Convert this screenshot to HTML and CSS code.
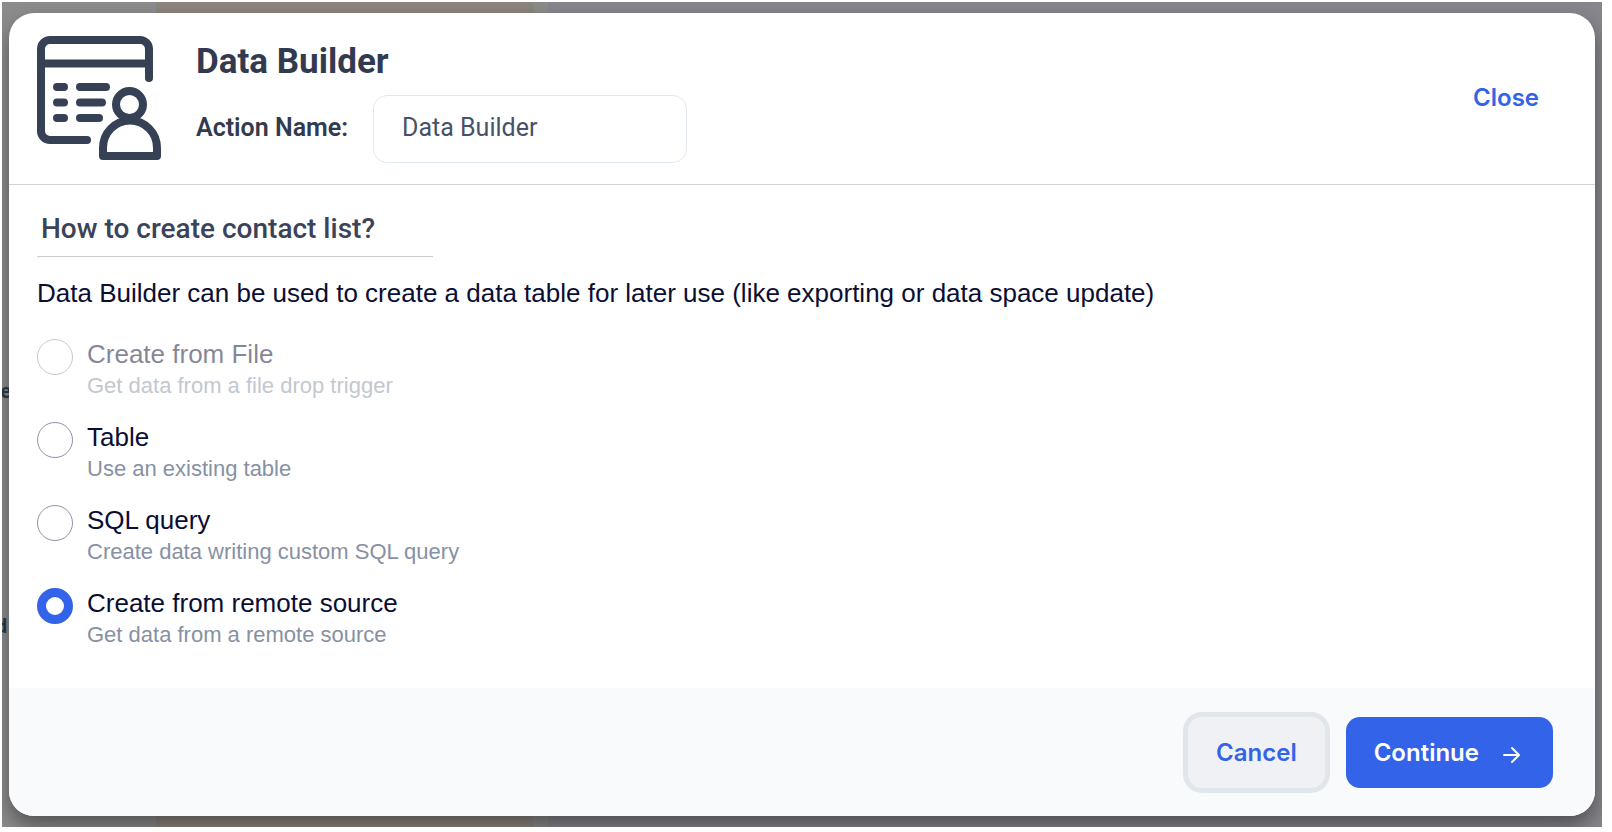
FILE: index.html
```
<!DOCTYPE html>
<html lang="en">
<head>
    <meta charset="utf-8">
    <title>Data Builder</title>
    <link rel="stylesheet" href="styles.css">
</head>
<body>
    <div class="backdrop">
        <span class="behind behind-first">e</span>
        <span class="behind behind-second">d</span>
        <form class="modal" role="dialog" aria-labelledby="title">
            <header class="modal-header">
                <svg class="logo" viewBox="0 0 124 124" fill="none" stroke="#364156" stroke-width="8" stroke-linecap="round" stroke-linejoin="round" aria-hidden="true">
                    <path d="M112 42V13a9 9 0 0 0-9-9H13a9 9 0 0 0-9 9v82a9 9 0 0 0 9 9h37"/>
                    <path d="M4 27.500h108"/>
                    <path d="M20 51h7M43 51h26M20 66.500h7M43 66.500h22M20 82h7M43 82h19"/>
                    <circle cx="92.500" cy="68.500" r="13.500"/>
                    <path d="M66 120v-8a26.500 27 0 0 1 54 0v8z"/>
                </svg>
                <div class="header-main">
                    <h1 id="title">Data Builder</h1>
                    <div class="name-row">
                        <label for="actionName">Action Name:</label>
                        <input type="text" id="actionName" value="Data Builder">
                    </div>
                </div>
                <button type="button" class="close">Close</button>
            </header>
            <main class="modal-body">
                <h2>How to create contact list?</h2>
                <p class="intro">Data Builder can be used to create a data table for later use (like exporting or data space update)</p>
                <div class="options">
                    <label class="option disabled">
                        <input type="radio" name="source" disabled>
                        <span class="option-text">
                            <span class="option-title">Create from File</span>
                            <span class="option-desc">Get data from a file drop trigger</span>
                        </span>
                    </label>
                    <label class="option">
                        <input type="radio" name="source">
                        <span class="option-text">
                            <span class="option-title">Table</span>
                            <span class="option-desc">Use an existing table</span>
                        </span>
                    </label>
                    <label class="option">
                        <input type="radio" name="source">
                        <span class="option-text">
                            <span class="option-title">SQL query</span>
                            <span class="option-desc">Create data writing custom SQL query</span>
                        </span>
                    </label>
                    <label class="option">
                        <input type="radio" name="source" checked>
                        <span class="option-text">
                            <span class="option-title">Create from remote source</span>
                            <span class="option-desc">Get data from a remote source</span>
                        </span>
                    </label>
                </div>
            </main>
            <footer class="modal-footer">
                <button type="button" class="btn cancel">Cancel</button>
                <button type="submit" class="btn continue">Continue
                    <svg class="arrow" viewBox="0 0 18 18" fill="none" stroke="#fff" stroke-width="2" stroke-linecap="round" stroke-linejoin="round" aria-hidden="true">
                        <path d="M1 9h15M9 2l7 7-7 7"/>
                    </svg>
                </button>
            </footer>
        </form>
    </div>
</body>
</html>
```
FILE: styles.css
```
* {
    box-sizing: border-box;
}
body {
    margin: 0;
    padding: 2px 10px 5px 2px;
    background-color: #fff;
    font-family: "Liberation Sans", Arial, sans-serif;
    color: #0b0e33;
}
h1, h2, p {
    margin: 0;
}
.backdrop {
    position: relative;
    overflow: hidden;
    min-height: calc(100vh - 7px);
    padding: 11px 7px;
    display: flex;
    background: linear-gradient(to right, #8c8c8c 154px, #8b857e 154px, #8b857e 532px, #8b8b8a 532px, #8b8b8a 546px, #86868c 546px);
}
/* page text showing past the left edge of the modal */
.behind {
    position: absolute;
    left: -2px;
    font: 700 20px/24px "Open Sans", sans-serif;
    color: #2f3a48;
}
.behind-first {
    top: 377px;
}
.behind-second {
    top: 612px;
    left: -7px;
}
.modal {
    position: relative;
    flex: 1;
    display: flex;
    flex-direction: column;
    border-radius: 25px;
    overflow: hidden;
    background-color: #fff;
    box-shadow: 0 10px 20px rgba(0, 0, 0, 0.4);
}
.modal-header {
    display: flex;
    align-items: center;
    padding: 19px 28px 21px;
    border-bottom: 1px solid #d1d3d6;
}
.logo {
    width: 124px;
    height: 124px;
}
.header-main {
    flex: 1;
    margin-left: 35px;
    font-family: Roboto, sans-serif;
    color: #323a50;
}
h1 {
    font-size: 35px;
    line-height: 60px;
    font-weight: 700;
}
.name-row {
    display: flex;
    align-items: center;
    gap: 25px;
    margin-top: 3px;
    font-size: 25px;
}
.name-row label {
    padding-bottom: 4px;
    font-weight: 600;
}
.name-row input {
    width: 314px;
    height: 68px;
    padding: 0 28px 4px;
    border: 1px solid #e2e8ef;
    border-radius: 14px;
    font: 400 25px Roboto, sans-serif;
    color: #475168;
}
button {
    border: none;
    background: none;
    cursor: pointer;
    font: 600 24px Inter, sans-serif;
    color: #3263e9;
}
.close {
    margin-right: 28px;
    padding: 0;
}
.modal-body {
    flex: 1;
    padding: 20px 28px;
}
h2 {
    width: 396px;
    padding: 4px 4px 7px;
    border-bottom: 1px solid #cccdd1;
    font: 500 28px/40px Roboto, sans-serif;
    color: #3b4358;
}
.intro {
    margin-top: 19px;
    font-size: 26px;
    line-height: 34px;
}
.options {
    display: grid;
    gap: 19px;
    margin-top: 27px;
}
.option {
    display: flex;
    align-items: flex-start;
    gap: 14px;
}
.option input {
    appearance: none;
    flex: none;
    width: 36px;
    height: 36px;
    margin: 2px 0 0;
    border: 1px solid #8d93a6;
    border-radius: 50%;
    background-color: #fff;
}
.option input:checked {
    border: 9px solid #3263e9;
}
.option-text {
    display: grid;
}
.option-title {
    font-size: 26px;
    line-height: 34px;
}
.option-desc {
    font-size: 22px;
    line-height: 30px;
    color: #8791a3;
}
.disabled {
    opacity: 0.5;
}
.modal-footer {
    display: flex;
    justify-content: flex-end;
    gap: 21px;
    padding: 29px 42px 28px;
    background-color: #f9fafc;
}
.btn {
    display: flex;
    align-items: center;
    height: 71px;
    padding: 0 28px;
    border-radius: 14px;
}
.cancel {
    background-color: #f0f1f5;
    box-shadow: 0 0 0 5px #e1e6ec;
}
.continue {
    gap: 24px;
    padding-right: 32px;
    background-color: #3263e9;
    color: #fff;
}
.arrow {
    width: 18px;
    height: 18px;
    margin-top: 4px;
}
```
